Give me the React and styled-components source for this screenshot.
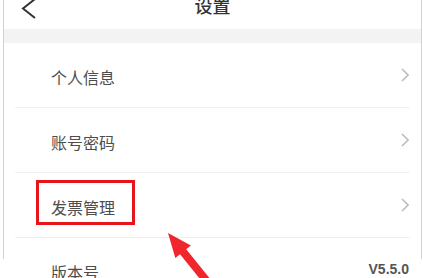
import React from "react";
import styled, { createGlobalStyle } from "styled-components";

const Global = createGlobalStyle`
  html, body { margin: 0; padding: 0; background: #fff; overflow: hidden; }
  body { font-family: "Noto Sans CJK SC", "Noto Sans", sans-serif; }
`;

const Page = styled.div`
  position: relative;
  width: 423px;
  height: 278px;
  overflow: hidden;
  background: #fff;
`;

const Frame = styled.div`
  margin-left: 3px;
  width: 417px;
  height: 100%;
  border-left: 1px solid #d2d2d2;
  border-right: 1px solid #d2d2d2;
  background: #fff;
`;

const Header = styled.div`
  margin-top: -19px;
  height: 48px;
  display: grid;
  grid-template-columns: 1fr auto 1fr;
  align-items: center;
`;

const Back = styled.div`
  padding-left: 17px;
  margin-top: 6px;
  display: flex;
  align-items: center;
`;

const Title = styled.div`
  font-size: 18px;
  font-weight: 500;
  color: #333;
  letter-spacing: 0;
`;

const Band = styled.div`
  height: 14px;
  background: #f3f3f3;
`;

const List = styled.div`
  margin: 0 11px;
`;

const Row = styled.div`
  position: relative;
  height: 64px;
  display: flex;
  align-items: center;
  justify-content: space-between;
  padding-left: 36px;
  padding-right: 1px;
  border-bottom: 1px solid #f0f0f0;
`;

const Label = styled.span`
  font-size: 16px;
  color: #4d4d4d;
  margin-top: 3px;
`;

const Version = styled.span`
  font-family: "Liberation Sans", Arial, sans-serif;
  font-size: 14px;
  font-weight: 700;
  color: #555;
  margin-top: -3px;
`;

const Highlight = styled.div`
  position: absolute;
  left: 21px;
  top: 7px;
  width: 99px;
  height: 45px;
  box-sizing: border-box;
  border: 3px solid #e8141b;
`;

const ArrowSvg = styled.svg`
  position: absolute;
  left: 0;
  top: 0;
  pointer-events: none;
`;

const Chevron = () => (
  <svg width="8" height="14" viewBox="0 0 8 14">
    <path d="M1 1 L7 7 L1 13" fill="none" stroke="#bdbdbd" strokeWidth="1.6" />
  </svg>
);

const items = [
  { label: "个人信息" },
  { label: "账号密码" },
  { label: "发票管理", highlight: true },
  { label: "版本号", value: "V5.5.0" },
];

export default function App() {
  return (
    <Page>
      <Global />
      <Frame>
        <Header>
          <Back>
            <svg width="15" height="21" viewBox="0 0 15 21">
              <path d="M14 1 L2 10.5 L14 20" fill="none" stroke="#333" strokeWidth="2" />
            </svg>
          </Back>
          <Title>设置</Title>
          <div />
        </Header>
        <Band />
        <List>
          {items.map((it) => (
            <Row key={it.label}>
              {it.highlight && <Highlight />}
              <Label>{it.label}</Label>
              {it.value ? <Version>{it.value}</Version> : <Chevron />}
            </Row>
          ))}
        </List>
      </Frame>
      <ArrowSvg width="423" height="278" viewBox="0 0 423 278">
        <polygon
          points="168,233 190.9,245.4 186.2,249.2 215.1,285 208.9,290 180,254.2 175.3,258"
          fill="#f0262c"
        />
      </ArrowSvg>
    </Page>
  );
}
